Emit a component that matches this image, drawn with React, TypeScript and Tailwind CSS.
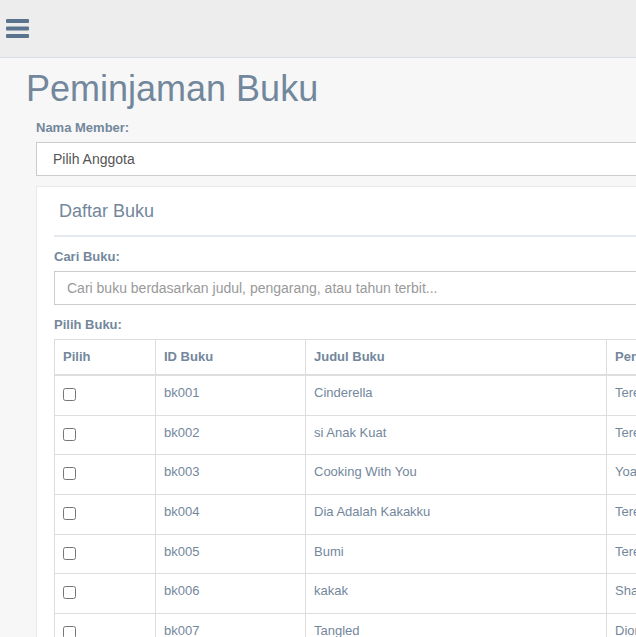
import React from 'react';

const books = [
  { id: 'bk001', judul: 'Cinderella', pengarang: 'Tere Liye', penerbit: 'Gramedia', tahun: '2019' },
  { id: 'bk002', judul: 'si Anak Kuat', pengarang: 'Tere Liye', penerbit: 'Republika', tahun: '2018' },
  { id: 'bk003', judul: 'Cooking With You', pengarang: 'Yoanita', penerbit: 'Gramedia', tahun: '2020' },
  { id: 'bk004', judul: 'Dia Adalah Kakakku', pengarang: 'Tere Liye', penerbit: 'Republika', tahun: '2017' },
  { id: 'bk005', judul: 'Bumi', pengarang: 'Tere Liye', penerbit: 'Gramedia', tahun: '2014' },
  { id: 'bk006', judul: 'kakak', pengarang: 'Shakira', penerbit: 'Mizan', tahun: '2021' },
  { id: 'bk007', judul: 'Tangled', pengarang: 'Dion', penerbit: 'Elex Media', tahun: '2010' },
  { id: 'bk008', judul: 'Hujan', pengarang: 'Tere Liye', penerbit: 'Gramedia', tahun: '2016' },
];

function MenuIcon() {
  return (
    <svg width="23" height="19" viewBox="0 0 23 19" className="block">
      <rect x="0" y="0" width="23" height="4" rx="1" fill="#5A738E" />
      <rect x="0" y="7.5" width="23" height="4" rx="1" fill="#5A738E" />
      <rect x="0" y="15" width="23" height="4" rx="1" fill="#5A738E" />
    </svg>
  );
}

export default function App() {
  return (
    <div className="h-screen overflow-hidden bg-[#F7F7F7] font-['Liberation_Sans',Arial,sans-serif] text-[13px] text-[#73879C]">
      {/* top nav */}
      <div className="h-[58px] bg-[#EDEDED] border-b border-[#D9DEE4] pl-[6px] pt-[19px]">
        <MenuIcon />
      </div>

      <div className="w-[1100px]">
        <h1 className="mt-[13px] pl-[26px] text-[36px] leading-[36px] font-normal">Peminjaman Buku</h1>

        <div className="pl-[36px] mt-[11px]">
          <label className="block h-[19px] leading-[19px] font-bold mb-[5px]">Nama Member:</label>
          <select className="block w-full h-[34px] appearance-none bg-white border border-[#ccc] pl-[16px] text-[14px] text-[#555] outline-none">
            <option>Pilih Anggota</option>
          </select>

          {/* panel */}
          <div className="mt-[10px] bg-white border border-[#E6E9ED] px-[17px] pt-[10px] pb-[20px]">
            <div className="pt-[4px] pl-[5px] pb-[14px] border-b-2 border-[#E6E9ED]">
              <h2 className="text-[18px] leading-[20px] font-normal">Daftar Buku</h2>
            </div>

            <div className="mt-[10px]">
              <label className="block h-[19px] leading-[19px] font-bold mb-[5px]">Cari Buku:</label>
              <input
                type="text"
                placeholder="Cari buku berdasarkan judul, pengarang, atau tahun terbit..."
                className="block w-full h-[34px] bg-white border border-[#ccc] px-[12px] text-[14px] text-[#555] placeholder-[#999] outline-none"
              />

              <label className="block mt-[10px] h-[19px] leading-[19px] font-bold mb-[5px]">Pilih Buku:</label>
              <table className="w-full table-fixed border-collapse border border-[#ddd]">
                <colgroup>
                  <col className="w-[101px]" />
                  <col className="w-[150px]" />
                  <col className="w-[301px]" />
                  <col className="w-[220px]" />
                  <col className="w-[160px]" />
                  <col />
                </colgroup>
                <thead>
                  <tr className="border-b-2 border-[#ddd]">
                    {['Pilih', 'ID Buku', 'Judul Buku', 'Pengarang', 'Penerbit', 'Tahun Terbit'].map((h) => (
                      <th key={h} className="border border-[#ddd] border-b-2 px-[8px] py-[8px] text-left font-bold leading-[18px] align-bottom">
                        {h}
                      </th>
                    ))}
                  </tr>
                </thead>
                <tbody>
                  {books.map((b) => (
                    <tr key={b.id}>
                      <td className="border border-[#ddd] px-[8px] py-[8px] align-top">
                        <div className="h-[22.67px] pt-[4px]">
                          <input type="checkbox" className="block w-[13px] h-[13px]" />
                        </div>
                      </td>
                      <td className="border border-[#ddd] px-[8px] py-[8px] align-top leading-[18.57px]">{b.id}</td>
                      <td className="border border-[#ddd] px-[8px] py-[8px] align-top leading-[18.57px]">{b.judul}</td>
                      <td className="border border-[#ddd] px-[8px] py-[8px] align-top leading-[18.57px]">{b.pengarang}</td>
                      <td className="border border-[#ddd] px-[8px] py-[8px] align-top leading-[18.57px]">{b.penerbit}</td>
                      <td className="border border-[#ddd] px-[8px] py-[8px] align-top leading-[18.57px]">{b.tahun}</td>
                    </tr>
                  ))}
                </tbody>
              </table>
            </div>
          </div>
        </div>
      </div>
    </div>
  );
}
